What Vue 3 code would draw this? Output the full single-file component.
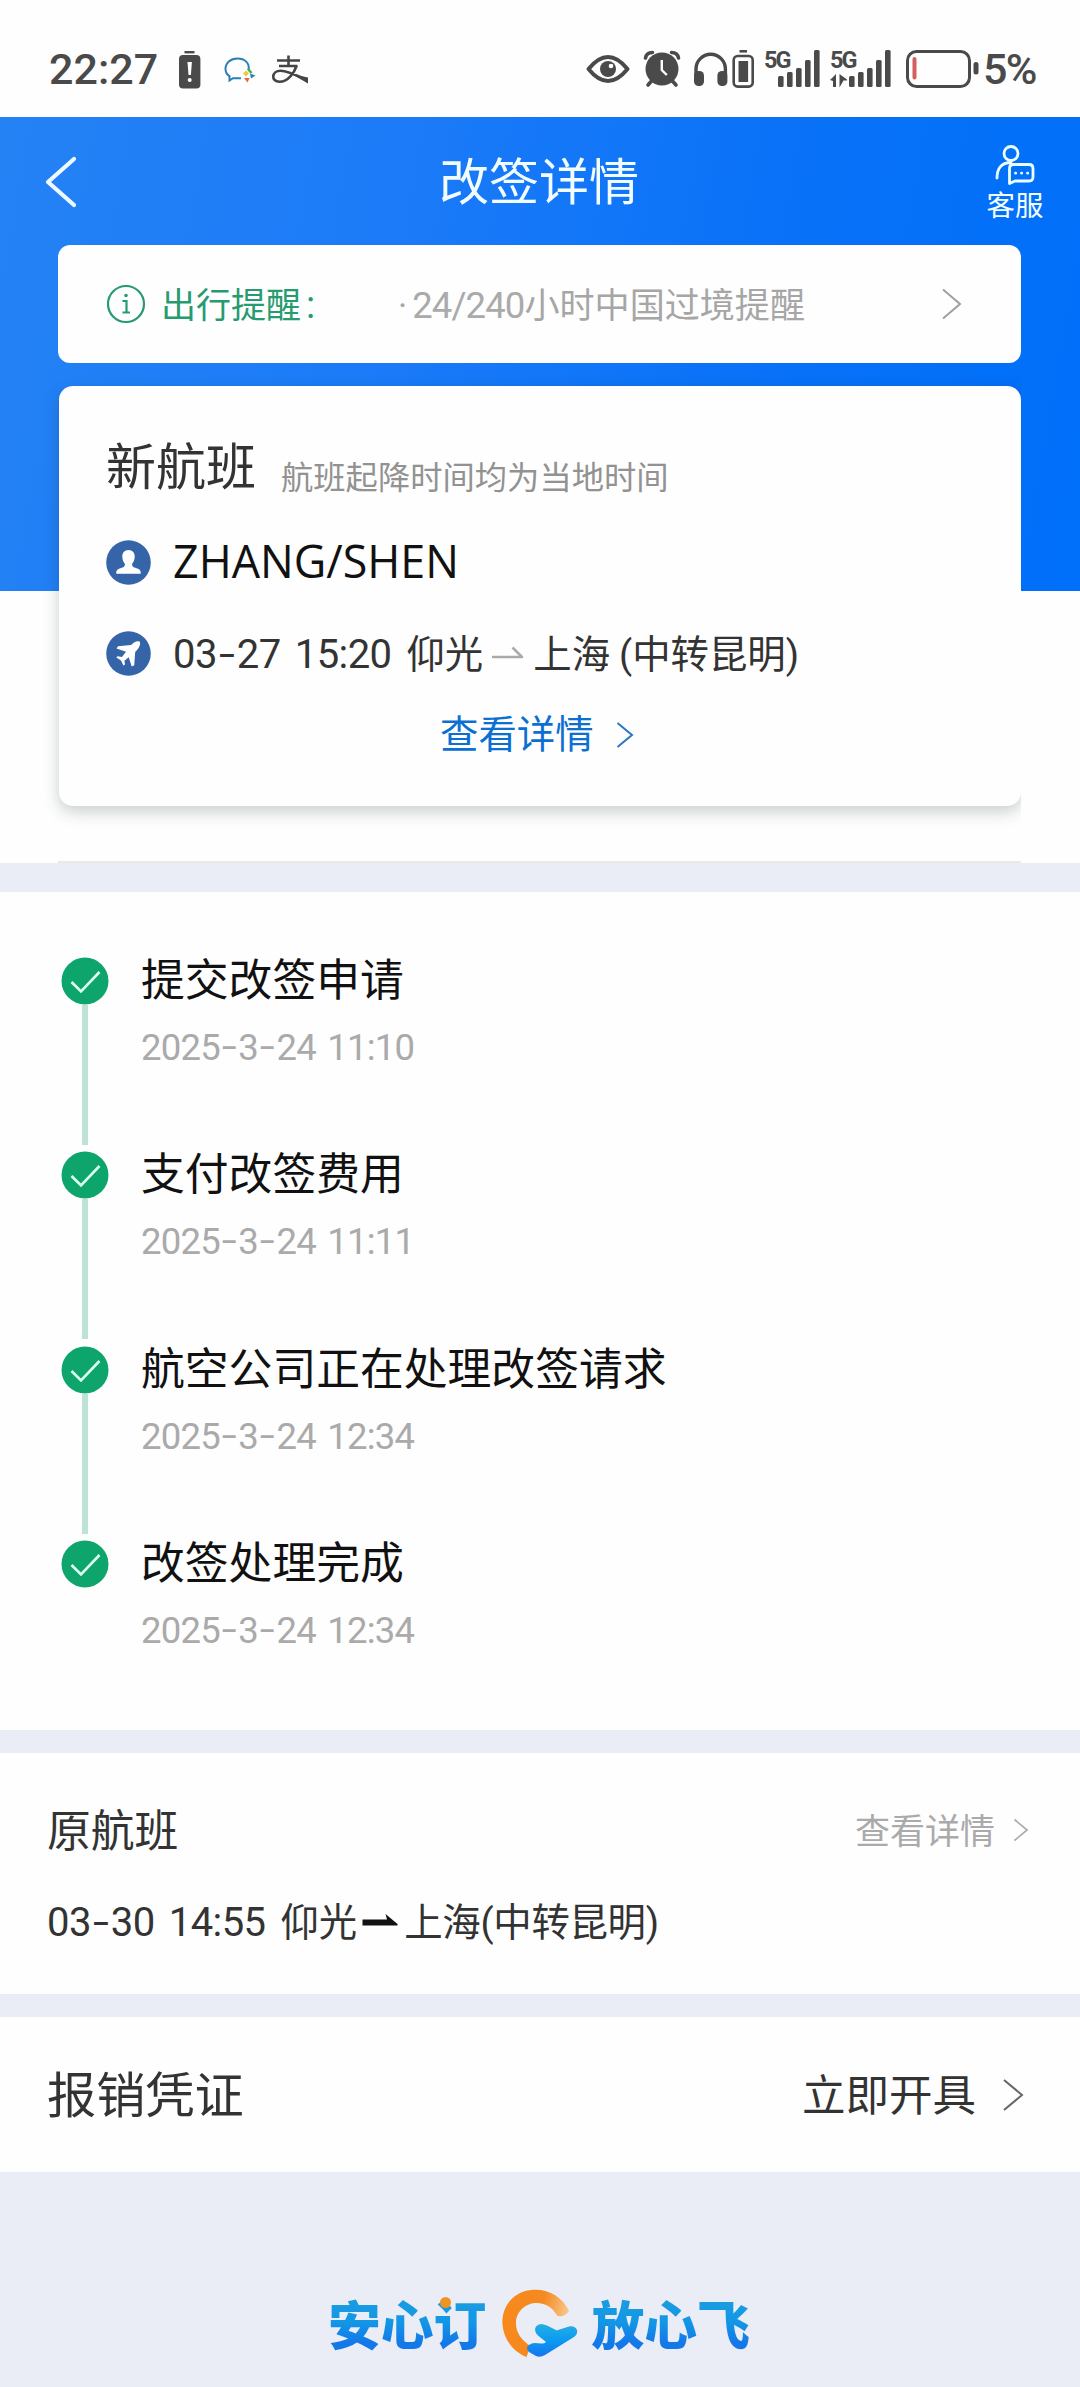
<script setup>
const steps = [
  { title: '提交改签申请', time: '2025-3-24 11:10' },
  { title: '支付改签费用', time: '2025-3-24 11:11' },
  { title: '航空公司正在处理改签请求', time: '2025-3-24 12:34' },
  { title: '改签处理完成', time: '2025-3-24 12:34' },
]

// Hyphens are drawn wider than the digits' font provides
const parts = (s) => s.split(/(-)/)

const barHeights = [11, 15, 19, 27, 37]
</script>

<template>
  <div class="page">
    <div class="status">
      <span class="clock">22:27</span>
      <svg class="s-alert" width="22" height="40" viewBox="179 50 22 40">
        <rect x="184.5" y="51" width="10" height="2.4" fill="#4a4a4a" />
        <rect x="179" y="55" width="21.4" height="33.4" rx="4" fill="#4a4a4a" />
        <path d="M187.5 62h4.4l-1 13h-2.4z" fill="#fff" />
        <circle cx="189.7" cy="80" r="2" fill="#fff" />
      </svg>
      <svg class="s-chat" width="32" height="40" viewBox="224 50 32 40" fill="none">
        <path d="M248.500 70c1.500-7-4-11.500-11-11.500s-12 4.500-12 10.500c0 3 1.500 5.500 4 7.200v4.300l3.500-2.300h8" stroke="#2a7fb5" stroke-width="2" />
        <path d="M246 70.500l3 3-3 3-3-3z" fill="#f0c63c" />
        <path d="M248 69l3.500 4" stroke="#3fae5c" stroke-width="2.600" />
        <path d="M250 73.500l5.500 2-4.500 3z" fill="#2a7fb5" />
        <path d="M244 78l5.500 0-2 4.500z" fill="#e2664a" />
      </svg>
      <svg class="s-pay" width="38" height="40" viewBox="271 50 38 40" fill="none" stroke="#454545">
        <path d="M288.500 55.500v9.500M277 60.500h23M279 66h18.500" stroke-width="2.600" />
        <path d="M296.500 66c-2 6-8 15.500-17 15.700-9 0-8-11 1-11 7 0 15 4 27 9.500" stroke-width="2.600" />
        <path d="M292 74.200l16 3.300v6z" fill="#454545" stroke="none" />
      </svg>
      <svg class="s-eye" width="46" height="40" viewBox="585 50 46 40">
        <path d="M588.500 69q19.500-24 39 0q-19.500 24-39 0z" fill="none" stroke="#4a4a4a" stroke-width="4" stroke-linejoin="round" />
        <circle cx="608" cy="69" r="8" fill="#4a4a4a" /><circle cx="611" cy="66" r="2.300" fill="#fff" />
      </svg>
      <svg class="s-alarm" width="38" height="40" viewBox="643 50 38 40" fill="none" stroke="#4a4a4a">
        <circle cx="662" cy="69" r="16.500" fill="#4a4a4a" stroke="none" />
        <path d="M645.500 58q1-5.500 7-5.500M678.500 58q-1-5.500-7-5.500M651.500 81l-3.500 4M672.500 81l3.500 4" stroke-width="3.600" stroke-linecap="round" />
        <path d="M661.800 60v10l5 5" stroke="#fff" stroke-width="2.400" />
      </svg>
      <svg class="s-head" width="62" height="40" viewBox="693 50 62 40">
        <path d="M696 75v-6a14.700 14.700 0 0 1 29.400 0v6" fill="none" stroke="#4a4a4a" stroke-width="3.400" />
        <rect x="694" y="71" width="10" height="15" rx="4.500" fill="#4a4a4a" /><rect x="717.400" y="71" width="10" height="15" rx="4.500" fill="#4a4a4a" />
        <rect x="739.500" y="50" width="7.500" height="2.600" fill="#4a4a4a" />
        <rect x="733.700" y="56" width="19" height="30.600" rx="4" fill="none" stroke="#4a4a4a" stroke-width="2.600" />
        <rect x="738.500" y="61" width="9.600" height="21" fill="#4a4a4a" />
      </svg>
      <div v-for="n in 2" :key="n" class="signal" :class="'signal-' + n">
        <span class="net">5G</span>
        <svg class="bars" width="61" height="40" viewBox="0 50 61 40" fill="#4a4a4a">
          <rect v-for="(h, i) in barHeights" :key="i" :x="(n === 1 ? 14 : 19) + i * 9" :y="87 - h" width="5.600" :height="h" rx="1.500" />
          <path v-if="n === 2" d="M0 80l6-6v13h-3v-6zM9.500 74l7.500 5.500v1h-3.500l-4 7z" />
        </svg>
      </div>
      <svg class="s-batt" width="74" height="40" viewBox="906 48 74 40">
        <rect x="908.500" y="49.500" width="62" height="35" rx="9" fill="none" stroke="#4a4a4a" stroke-width="3" />
        <rect x="913.500" y="55" width="4" height="22.500" rx="2" fill="#d45f5f" />
        <rect x="974.500" y="60" width="5" height="12.500" rx="2.500" fill="#4a4a4a" />
      </svg>
      <span class="pct">5%</span>
    </div>

    <section class="hero">
      <header class="nav">
        <svg class="back" width="36" height="54" viewBox="0 0 36 54"><path d="M31 4L5 27l26 23" fill="none" stroke="#eefaff" stroke-width="4.200" stroke-linecap="round" stroke-linejoin="round" /></svg>
        <h1>改签详情</h1>
        <div class="service">
          <svg width="42" height="42" viewBox="0 0 42 42" fill="none" stroke="#eaffff" stroke-width="2.800" stroke-linecap="round" stroke-linejoin="round">
            <circle cx="17" cy="9.500" r="7" />
            <path d="M3 34C3 24 8 18.500 17 18.500M15.500 39.500V24.500q0-4 4-4H35q4 0 4 4V33q0 4-4 4H21z" />
            <path d="M21.500 29.200h.2M27.500 29.200h.2M33.500 29.200h.2" />
          </svg>
          <span>客服</span>
        </div>
      </header>

      <div class="notice">
        <svg width="40" height="40" viewBox="0 0 40 40" fill="none" stroke="#279b70" stroke-width="2.200">
          <circle cx="20" cy="20" r="18" /><circle cx="20" cy="11.500" r="1.800" fill="#279b70" stroke="none" />
          <path d="M16.500 17H20.500V28.500M16.500 28.500H24" />
        </svg>
        <span class="n-label">出行提醒<i>:</i></span>
        <span class="n-text"><i>·</i><b>24/240</b>小时中国过境提醒</span>
        <svg class="n-arrow" width="22" height="34" viewBox="0 0 22 34"><path d="M2 2.500L19 17 2 31.500" fill="none" stroke="#a0a0a0" stroke-width="2" /></svg>
      </div>

      <div class="card-wrap">
        <div class="card">
          <div class="c-title"><h2>新航班</h2><span>航班起降时间均为当地时间</span></div>
          <div class="c-name">
            <svg width="45" height="45" viewBox="0 0 45 45"><circle cx="22.500" cy="22.500" r="22.300" fill="#3565a8" /><path d="M22.500 10c4 0 6.500 3 6.200 7-.2 3.500-1.500 5.500-2.700 7 .3 3.500 2.500 3.500 5.500 4.500 3 1 3.500 3 3.200 5.200H10.300c-.3-2.200.2-4.200 3.200-5.200 3-1 5.200-1 5.500-4.500-1.200-1.500-2.500-3.500-2.700-7-.3-4 2.200-7 6.200-7z" fill="#fff" /></svg>
            <span>ZHANG/SHEN</span>
          </div>
          <div class="c-flight">
            <svg width="45" height="45" viewBox="0 0 45 45"><circle cx="22.500" cy="22.500" r="22.300" fill="#3565a8" /><path d="M33.800 10.800c-2.700-1.400-6 .4-8.600 3.300L12 15.200l-1.500 2.300 9.500 3.300-4 5.200-4.500-.8-1.200 1.400 4.700 2.800 2.400 5.200 1.600-1.200-.6-3.600 4.300-3.600 3 9.300 2.500-1.200 1-13.200c3.200-3.200 5.900-7.400 4.600-10.300z" fill="#fff" /></svg>
            <span class="route"><template v-for="(p, i) in parts('03-27')" :key="i"><i :class="p === '-' ? 'hy' : 'num'">{{ p }}</i></template><i class="num">&nbsp;15:20</i><b>仰光</b></span>
            <svg class="arr" width="34" height="16" viewBox="0 0 34 16"><path d="M1 12H31L21.500 2.500" fill="none" stroke="#aaa" stroke-width="2.600" stroke-linejoin="round" /></svg>
            <span class="route">上海<i class="sp"></i>(中转昆明)</span>
          </div>
          <div class="c-link"><span>查看详情</span><svg width="18" height="28" viewBox="0 0 18 28"><path d="M1.500 2L16 14 1.500 26" fill="none" stroke="#2677c4" stroke-width="2" /></svg></div>
        </div>
      </div>
      <div class="hairline"></div>
    </section>

    <section class="timeline">
      <div v-for="(s, k) in steps" :key="k" class="step">
        <div class="mark">
          <svg width="48" height="48" viewBox="0 0 48 48"><circle cx="24" cy="24" r="23.500" fill="#0ea56d" /><path d="M10.500 25L20 34.500 38.500 15" fill="none" stroke="#dcfff0" stroke-width="2.600" /></svg>
          <div v-if="k < 3" class="line"></div>
        </div>
        <div class="body">
          <div class="s-title">{{ s.title }}</div>
          <div class="s-time"><template v-for="(p, i) in parts(s.time)" :key="i"><i :class="p === '-' ? 'hy' : 'num'">{{ p }}</i></template></div>
        </div>
      </div>
    </section>

    <section class="orig">
      <div class="o-head"><span class="o-title">原航班</span><span class="o-link">查看详情</span><svg width="16" height="24" viewBox="0 0 16 24"><path d="M1.500 1.500L14 12 1.500 22.500" fill="none" stroke="#aaa" stroke-width="1.700" /></svg></div>
      <div class="o-row">
        <span class="route"><template v-for="(p, i) in parts('03-30')" :key="i"><i :class="p === '-' ? 'hy' : 'num'">{{ p }}</i></template><i class="num">&nbsp;14:55</i><b>仰光</b></span>
        <svg class="arr2" width="36" height="14" viewBox="0 0 36 14"><path d="M.500 5.500H25L23.500 0 35.500 10V11.500H.500z" fill="#111" /></svg>
        <span class="route">上海(中转昆明)</span>
      </div>
    </section>

    <section class="voucher">
      <span class="v-title">报销凭证</span><span class="v-link">立即开具</span>
      <svg width="22" height="34" viewBox="0 0 22 34"><path d="M2 2L20 17 2 32" fill="none" stroke="#666" stroke-width="2" /></svg>
    </section>

    <footer>
      <span class="slogan first">安心订<i class="dot"></i></span>
      <svg class="logo" width="80" height="72" viewBox="0 0 80 72">
        <defs>
          <linearGradient id="ring" x1="0" y1="0" x2="1" y2=".3"><stop offset="0" stop-color="#f8891c" /><stop offset=".6" stop-color="#f5891f" /><stop offset="1" stop-color="#f9c78c" /></linearGradient>
          <linearGradient id="plane" x1="0" y1="0" x2="0" y2="1"><stop offset="0" stop-color="#28aee4" /><stop offset=".5" stop-color="#0a9bf0" /><stop offset="1" stop-color="#1674ee" /></linearGradient>
        </defs>
        <path d="M69 24C62 9 47 1 31 3 12 5 1 21 2.500 38c1.500 15 11 27 24 32l4-11C21 53 15.500 45 16 35c.500-11 10-19 20.500-19 10 0 16 5 21 13 5 1 9-1 11.500-5z" fill="url(#ring)" />
        <path d="M35 43q0-5 6-6 3 0 6 1.500l9 4.500q1 .500 2 0l11-3.500q6-1 8 3.500 1 4-3 7L45 68q-5 3-9 1l-7-4q-4-4 0-7 2-2 6-2l6 .500q3 .500 5-1.500l-8-6.500q-3-3-3-5.500z" fill="url(#plane)" />
      </svg>
      <span class="slogan">放心飞</span>
    </footer>
  </div>
</template>

<style>
body { margin: 0; background: #eaedf6; }
</style>

<style scoped>
.page { width: 1080px; height: 2387px; overflow: hidden; background: #eaedf6; color: #333; font-family: Roboto, "Noto Sans CJK SC", sans-serif; display: flex; flex-direction: column; }
i, b { font-style: normal; font-weight: inherit; }
svg { flex: none; display: block; }
h1, h2 { margin: 0; font-weight: 400; }

.status { height: 67px; padding-top: 50px; display: flex; align-items: flex-start; background: #fefefe; color: #4a4a4a; flex: none; }
.clock { font-size: 43px; line-height: 38px; font-weight: 500; letter-spacing: 0; margin-left: 49px; width: 130px; flex: none; }
.s-chat { margin-left: 23px; }
.s-pay { margin-left: 15px; }
.s-eye { margin-left: 276px; }
.s-alarm { margin-left: 12px; }
.s-head { margin-left: 12px; }
.signal { width: 61px; height: 40px; position: relative; flex: none; }
.signal-1 { margin-left: 9px; }
.signal-2 { margin-left: 5px; }
.net { position: absolute; left: 0; top: -1px; font-size: 23.5px; line-height: 22px; font-weight: 700; letter-spacing: -2px; }
.bars { position: absolute; left: 0; top: 0; }
.s-batt { margin-left: 14px; }
.pct { font-size: 43px; line-height: 38px; font-weight: 500; margin-left: 4px; letter-spacing: -1.6px; }

.hero { height: 746px; flex: none; background: linear-gradient(100deg, #2582f5 0%, #1a7af8 38%, #0771f8 72%, #006ff9 100%) top / 100% 474px no-repeat #fefefe; display: flex; flex-direction: column; }
.nav { height: 128px; display: flex; align-items: flex-start; flex: none; color: #f2fdff; }
.back { margin: 38px 0 0 43px; }
.nav h1 { font-size: 50px; line-height: 60px; margin: 36px 0 0 360px; width: 545px; }
.service { width: 62px; display: flex; flex-direction: column; align-items: center; padding-top: 27px; font-size: 28.5px; line-height: 34px; }
.service span { margin-top: 4px; }
.notice { width: 963px; height: 118px; margin-left: 58px; border-radius: 12px; background: #fefefe; display: flex; align-items: center; font-size: 35px; flex: none; }
.notice > svg:first-child { margin-left: 48px; }
.n-label { color: #279b70; width: 237px; margin-left: 15px; display: flex; padding-bottom: 4px; }
.n-label i { margin: 6px 0 -6px 5px; font-size: 38px; }
.n-text { color: #a6a6a6; width: 543px; white-space: nowrap; font-size: 35.1px; padding-bottom: 4px; }
.n-text i { letter-spacing: 5px; }
.n-text b { font-size: 36.5px; letter-spacing: -.9px; color: #aaa; }
.card-wrap { width: 963px; margin: 23px 0 0 58px; height: 475px; clip-path: inset(-30px 0 0 -40px); flex: none; }
.card { height: 420px; box-sizing: border-box; padding-top: 28px; margin-left: 1px; border-radius: 14px; background: #fefefe; box-shadow: 0 6px 16px rgba(20, 40, 40, .22); }
.c-title { height: 98px; padding-bottom: 6px; display: flex; align-items: center; padding-left: 47px; }
.c-title h2 { font-size: 50px; width: 175px; }
.c-title span { font-size: 32.3px; color: #929292; margin-top: 24px; }
.c-name { height: 88px; display: flex; align-items: center; padding-left: 47px; font: 44.8px "Open Sans", "Noto Sans", sans-serif; color: #111; }
.c-name span { margin-left: 22px; padding-bottom: 3px; }
.c-flight { height: 94px; display: flex; align-items: center; padding-left: 47px; }
.c-flight svg + .route { margin-left: 22px; }
.route { font-size: 38.4px; white-space: nowrap; padding-bottom: 4px; }
.num { font-size: 40px; letter-spacing: -.6px; word-spacing: 5px; }
.route b { margin-left: 15px; }
.hy { display: inline-block; transform: translateY(-1px) scaleX(1.5); width: 20px; text-align: center; font-weight: 400; }
.sp { display: inline-block; width: 9px; }
.c-flight .arr { margin-left: 8px; }
.c-flight .arr + .route { margin-left: 8px; }
.c-link { height: 66px; display: flex; align-items: center; padding-left: 381px; font-size: 38.4px; color: #0c6fd2; }
.c-link span { padding-bottom: 5px; }
.c-link svg { margin: 4px 0 0 22px; }
.hairline { width: 963px; height: 2px; margin: 0 0 0 58px; background: #e9e9ea; flex: none; }

.timeline { margin-top: 29px; height: 773px; padding: 65px 0 0 61px; background: #fefefe; flex: none; }
.step { display: flex; height: 194.4px; }
.mark { width: 48px; display: flex; flex-direction: column; align-items: center; }
.line { width: 6px; height: 140px; background: #bce3d5; }
.body { margin-left: 32px; }
.s-title { font-size: 43.8px; line-height: 50px; margin-top: -1px; color: #111; white-space: nowrap; }
.s-time { font-size: 36px; line-height: 44px; margin-top: 20px; color: #aaa; white-space: nowrap; }
.s-time .num { font-size: 36.5px; letter-spacing: -.8px; word-spacing: 3px; }
.s-time .hy { width: 18.5px; }

.orig { margin-top: 23px; height: 241px; background: #fefefe; flex: none; }
.o-head { height: 92px; padding: 31px 51px 0 47px; display: flex; align-items: center; }
.o-title { font-size: 43.8px; flex: 1; padding-bottom: 5px; }
.o-link { font-size: 35px; color: #aaa; margin-right: 18px; padding-bottom: 4px; }
.o-row { height: 90px; padding-bottom: 2px; display: flex; align-items: center; padding-left: 47px; }
.arr2 { margin: 0 6px 0 5px; }
.arr2 + .route { letter-spacing: -.3px; }

.voucher { margin-top: 23px; height: 155px; padding: 0 56px 0 47px; display: flex; align-items: center; background: #fefefe; flex: none; }
.v-title { font-size: 49.2px; flex: 1; padding-bottom: 7px; }
.v-link { font-size: 43.5px; margin-right: 26px; padding-bottom: 4px; }

footer { height: 215px; display: flex; align-items: flex-start; padding: 115px 0 0 328px; box-sizing: border-box; }
.slogan { position: relative; font-family: "Noto Sans CJK SC", sans-serif; font-weight: 900; font-size: 52.8px; line-height: 70px; background: linear-gradient(#1b9ce0 20%, #1397e6 50%, #1378e8 80%); background-clip: text; -webkit-background-clip: text; color: transparent; white-space: nowrap; }
.logo { margin: 0 11px 0 14px; }
.dot { position: absolute; left: 112px; top: 10px; width: 11px; height: 11px; border-radius: 50%; background: #ee9420; }
</style>
